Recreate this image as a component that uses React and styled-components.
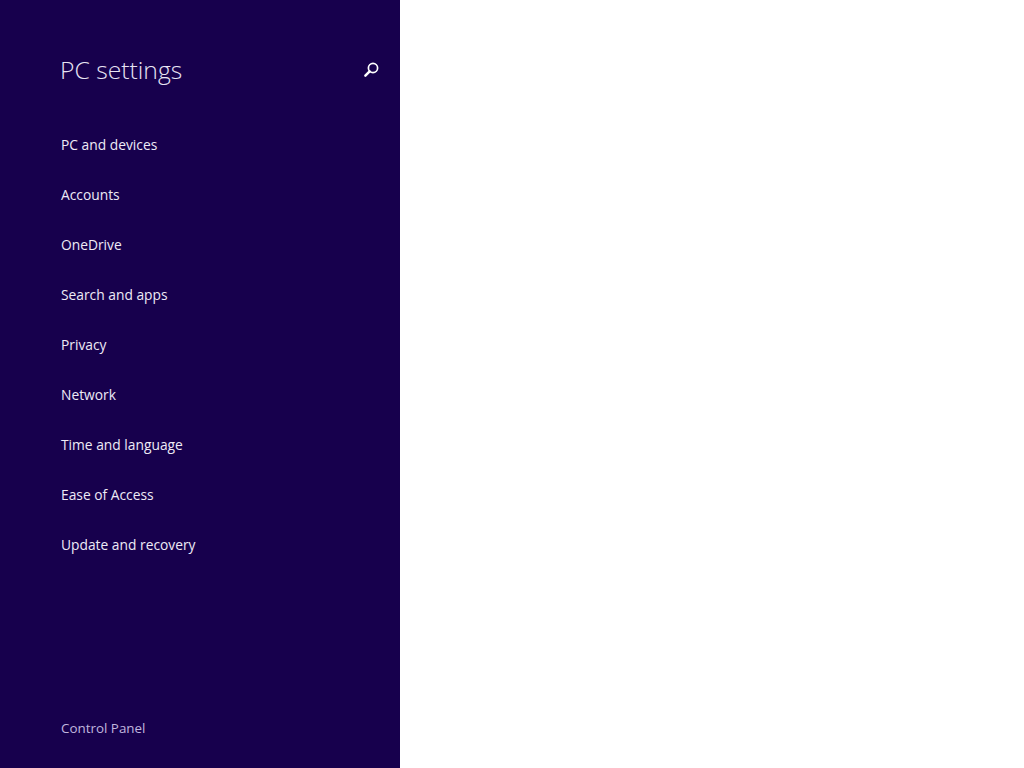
import styled, { createGlobalStyle } from "styled-components";

const GlobalStyle = createGlobalStyle`
  html, body {
    margin: 0;
    padding: 0;
    height: 100%;
    background: #fff;
  }
  #root {
    height: 100%;
  }
`;

const Page = styled.div`
  display: flex;
  height: 768px;
  font-family: "Open Sans", "Noto Sans", sans-serif;
`;

const Sidebar = styled.aside`
  display: flex;
  flex-direction: column;
  width: 400px;
  background: #17004d;
  color: #fff;
  box-sizing: border-box;
  padding: 51px 19px 30px 60px;
`;

const Header = styled.header`
  display: flex;
  align-items: center;
  justify-content: space-between;
  height: 38px;
  margin-bottom: 31px;
`;

const Title = styled.h1`
  margin: 0;
  font-size: 24.7px;
  line-height: 38px;
  font-weight: 300;
  color: #e8e4f4;
`;

const SearchButton = styled.button`
  display: flex;
  padding: 0;
  border: 0;
  background: none;
  color: #fff;
`;

const NavList = styled.nav`
  display: flex;
  flex-direction: column;
  flex: 1;
`;

const NavItem = styled.a`
  display: block;
  height: 50px;
  padding-left: 1px;
  font-size: 13.8px;
  line-height: 50px;
  color: #eeebf6;
`;

const FooterLink = styled.a`
  display: block;
  padding-left: 1px;
  font-size: 13.4px;
  line-height: 20px;
  color: #c0b6de;
`;

const Content = styled.main`
  flex: 1;
  background: #fff;
`;

const items = [
  "PC and devices",
  "Accounts",
  "OneDrive",
  "Search and apps",
  "Privacy",
  "Network",
  "Time and language",
  "Ease of Access",
  "Update and recovery",
];

function SearchIcon() {
  return (
    <svg width="20" height="20" viewBox="0 0 20 20" fill="none" stroke="currentColor">
      <circle cx="12" cy="8" r="4.6" strokeWidth="1.7" />
      <path d="M8.6 11.4 L4.4 15.6" strokeWidth="2.5" strokeLinecap="round" />
    </svg>
  );
}

export default function App() {
  return (
    <>
      <GlobalStyle />
      <Page>
        <Sidebar>
          <Header>
            <Title>PC settings</Title>
            <SearchButton aria-label="Search">
              <SearchIcon />
            </SearchButton>
          </Header>
          <NavList>
            {items.map((item) => (
              <NavItem key={item}>{item}</NavItem>
            ))}
          </NavList>
          <FooterLink>Control Panel</FooterLink>
        </Sidebar>
        <Content />
      </Page>
    </>
  );
}
